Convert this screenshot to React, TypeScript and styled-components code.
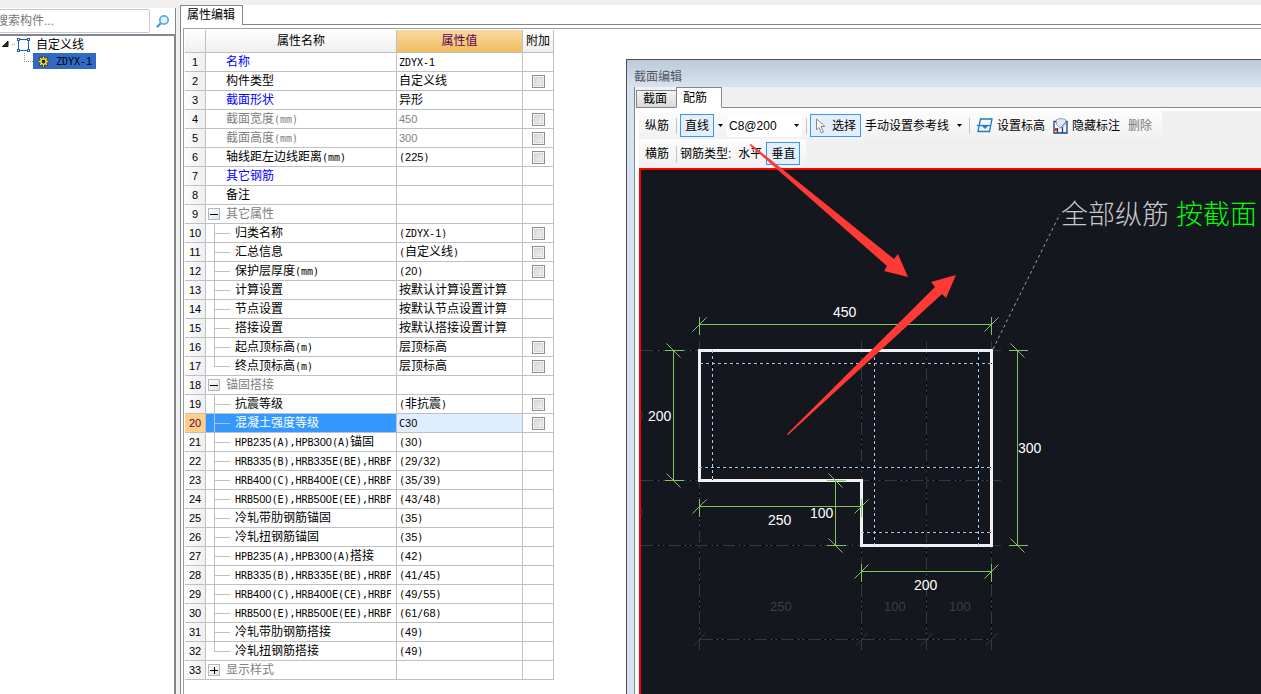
import React from "react";
import styled, { createGlobalStyle, css } from "styled-components";

const GlobalStyle = createGlobalStyle`
  * { box-sizing: border-box; }
  html, body { margin: 0; padding: 0; }
  body {
    background: #f0f0f0;
    color: #000;
    font-family: "Liberation Sans", "Noto Sans CJK SC", sans-serif;
    font-size: 12px;
    line-height: 16px;
    overflow: hidden;
  }
  button, input, select { font: inherit; color: inherit; margin: 0; }
`;

/* ---------- text ---------- */

const Latin = styled.span`
  font-family: "DejaVu Sans Mono", monospace;
  font-size: 10px;
  line-height: 1;
`;

const Digits = styled.span`
  font-family: "Liberation Sans", sans-serif;
  font-size: 11px;
  line-height: 1;
`;

function Mixed({ text }: { text: string }) {
  const parts = text.match(/[0-9]+|[!-/:-~]+|[^!-~]+/g) || [];
  return (
    <span>
      {parts.map((part, i) => {
        if (/^[0-9]/.test(part)) return <Digits key={i}>{part}</Digits>;
        if (/^[!-~]/.test(part)) return <Latin key={i}>{part}</Latin>;
        return part;
      })}
    </span>
  );
}

/* ---------- page ---------- */

const Page = styled.div`
  position: relative;
  display: flex;
  gap: 4px;
  min-height: 100vh;
  padding-top: 5px;
  background: #f0f0f0;
`;

const Sidebar = styled.aside`
  display: flex;
  flex-direction: column;
  flex: 0 0 176px;
  padding-top: 3px;
  overflow: hidden;
`;

const SearchRow = styled.form`
  display: flex;
  align-items: center;
  height: 26px;
  background: #fff;
  border-right: 1px solid #84868b;
`;

const SearchInput = styled.input`
  width: 156px;
  height: 24px;
  margin-left: -6px;
  padding: 0 1px;
  border: 1px solid #c5cad8;
  border-radius: 2px;
  background: #fff;
  outline: none;
  &::placeholder { color: #777; opacity: 1; }
`;

const SearchButton = styled.button`
  display: flex;
  align-items: center;
  justify-content: center;
  flex: 1;
  height: 24px;
  padding: 0;
  border: 0;
  background: transparent;
`;

const Tree = styled.div`
  flex: 1;
  padding-top: 1px;
  background: #fff;
  border-top: 2px solid #84868b;
  border-right: 2px solid #84868b;
`;

const TreeItem = styled.div<{ $level: number }>`
  display: flex;
  align-items: center;
  height: 16px;
  padding-left: ${(p) => (p.$level ? 24 : 1)}px;
`;

const TreeLabel = styled.span<{ $selected?: boolean }>`
  display: flex;
  align-items: center;
  height: 16px;
  gap: 7px;
  padding: 0 4px 0 5px;
  background: ${(p) => (p.$selected ? "#316ac5" : "transparent")};
`;

const Workspace = styled.main`
  display: flex;
  flex-direction: column;
  flex: 1;
  min-width: 0;
  background: #fff;
  border-left: 1px solid #84868b;
`;

const TabStrip = styled.div`
  display: flex;
  height: 20px;
`;

const PaneTab = styled.button`
  width: 62px;
  padding: 0 1px 2px 0;
  border: 1px solid #84868b;
  border-width: 1px 1px 0 0;
  background: #fff;
`;

const TabRule = styled.div`
  flex: 1;
  border-bottom: 1px solid #84868b;
`;

const GridFrame = styled.section`
  flex: 1;
  margin: 3px 0 0 2px;
  padding: 1px 0 0 1px;
  border: 1px solid #a0a0a0;
  border-width: 1px 0 0 1px;
`;

/* ---------- property grid ---------- */

const Grid = styled.table`
  table-layout: fixed;
  width: 369px;
  border-collapse: separate;
  border-spacing: 0;
`;

const HeadCell = styled.th<{ $active?: boolean }>`
  height: 23px;
  padding: 0;
  font-weight: normal;
  color: ${(p) => (p.$active ? "#5c0057" : "#000")};
  background: ${(p) =>
    p.$active
      ? "linear-gradient(#f9d9a0, #f0bd5e)"
      : "linear-gradient(#ffffff, #efefef)"};
  border-right: 1px solid #c0c0c0;
  border-bottom: 1px solid #c0c0c0;
`;

const cell = css`
  height: 19px;
  padding: 0;
  line-height: 16px;
  white-space: nowrap;
  overflow: hidden;
  border-right: 1px solid #c0c0c0;
  border-bottom: 1px solid #c0c0c0;
`;

const NumberCell = styled.th<{ $selected: boolean }>`
  ${cell}
  font-weight: normal;
  color: ${(p) => (p.$selected ? "#5c0057" : "#000")};
  background: ${(p) =>
    p.$selected ? "#ffcf86" : "linear-gradient(90deg, #fdfdfd, #efefef)"};
`;

const tones = { normal: "#000", link: "#0000ff", muted: "#808080" };
type Tone = keyof typeof tones;

const NameCell = styled.td<{ $tone: Tone; $selected: boolean }>`
  ${cell}
  color: ${(p) => (p.$selected ? "#fff" : tones[p.$tone])};
  background: ${(p) => (p.$selected ? "#3399ff" : "#fff")};
`;

const NameContent = styled.div<{ $indent: number }>`
  display: flex;
  align-items: center;
  height: 18px;
  padding: 0 5px 0 ${(p) => p.$indent}px;
  > span { overflow: hidden; }
`;

const BranchLines = styled.svg`
  flex: none;
  width: 21px;
  height: 18px;
`;

const Expander = styled.button`
  display: flex;
  align-items: center;
  justify-content: center;
  flex: none;
  width: 12px;
  height: 12px;
  margin-right: 6px;
  padding: 0;
  border: 1px solid #b4b9c0;
  background: linear-gradient(135deg, #fff, #dfe3e8);
`;

const ValueCell = styled.td<{ $muted: boolean; $selected: boolean }>`
  ${cell}
  padding-left: 2px;
  color: ${(p) => (p.$muted ? "#808080" : "#000")};
  background: ${(p) => (p.$selected ? "#dfeeff" : "#fff")};
`;

const CheckCell = styled.td`
  ${cell}
  line-height: 0;
  text-align: center;
  vertical-align: middle;
`;

const Check = styled.input`
  appearance: none;
  width: 13px;
  height: 13px;
  vertical-align: middle;
  border: 1px solid #8e8f8f;
  background: linear-gradient(135deg, #cdd1d6, #f6f6f6);
  box-shadow: inset 0 0 0 1px #f4f4f4, inset 0 0 0 2px #d4d7db;
`;

type Row = {
  name: string;
  value?: string;
  tone?: Tone;
  kind?: "group" | "closed" | "child" | "last";
  check?: boolean;
  selected?: boolean;
};

const rows: Row[] = [
  { name: "名称", value: "ZDYX-1", tone: "link" },
  { name: "构件类型", value: "自定义线", check: true },
  { name: "截面形状", value: "异形", tone: "link" },
  { name: "截面宽度(mm)", value: "450", tone: "muted", check: true },
  { name: "截面高度(mm)", value: "300", tone: "muted", check: true },
  { name: "轴线距左边线距离(mm)", value: "(225)", check: true },
  { name: "其它钢筋", tone: "link" },
  { name: "备注" },
  { name: "其它属性", tone: "muted", kind: "group" },
  { name: "归类名称", value: "(ZDYX-1)", kind: "child", check: true },
  { name: "汇总信息", value: "(自定义线)", kind: "child", check: true },
  { name: "保护层厚度(mm)", value: "(20)", kind: "child", check: true },
  { name: "计算设置", value: "按默认计算设置计算", kind: "child" },
  { name: "节点设置", value: "按默认节点设置计算", kind: "child" },
  { name: "搭接设置", value: "按默认搭接设置计算", kind: "child" },
  { name: "起点顶标高(m)", value: "层顶标高", kind: "child", check: true },
  { name: "终点顶标高(m)", value: "层顶标高", kind: "last", check: true },
  { name: "锚固搭接", tone: "muted", kind: "group" },
  { name: "抗震等级", value: "(非抗震)", kind: "child", check: true },
  { name: "混凝土强度等级", value: "C30", kind: "child", check: true, selected: true },
  { name: "HPB235(A),HPB300(A)锚固", value: "(30)", kind: "child" },
  { name: "HRB335(B),HRB335E(BE),HRBF", value: "(29/32)", kind: "child" },
  { name: "HRB400(C),HRB400E(CE),HRBF", value: "(35/39)", kind: "child" },
  { name: "HRB500(E),HRB500E(EE),HRBF", value: "(43/48)", kind: "child" },
  { name: "冷轧带肋钢筋锚固", value: "(35)", kind: "child" },
  { name: "冷轧扭钢筋锚固", value: "(35)", kind: "child" },
  { name: "HPB235(A),HPB300(A)搭接", value: "(42)", kind: "child" },
  { name: "HRB335(B),HRB335E(BE),HRBF", value: "(41/45)", kind: "child" },
  { name: "HRB400(C),HRB400E(CE),HRBF", value: "(49/55)", kind: "child" },
  { name: "HRB500(E),HRB500E(EE),HRBF", value: "(61/68)", kind: "child" },
  { name: "冷轧带肋钢筋搭接", value: "(49)", kind: "child" },
  { name: "冷轧扭钢筋搭接", value: "(49)", kind: "last" },
  { name: "显示样式", tone: "muted", kind: "closed" },
];

function PropertyRow({ row, index }: { row: Row; index: number }) {
  const selected = !!row.selected;
  const branch = row.kind === "child" || row.kind === "last";
  const group = row.kind === "group" || row.kind === "closed";
  return (
    <tr>
      <NumberCell scope="row" $selected={selected}>
        <Mixed text={String(index)} />
      </NumberCell>
      <NameCell $tone={row.tone || "normal"} $selected={selected}>
        <NameContent $indent={branch ? 8 : group ? 2 : 20}>
          {branch && (
            <BranchLines viewBox="0 0 21 18" shapeRendering="crispEdges">
              <path
                d={row.kind === "last" ? "M.5 0V9.5H16" : "M.5 0V18M.5 9.5H16"}
                fill="none"
                stroke="#c0c0c0"
              />
            </BranchLines>
          )}
          {group && (
            <Expander aria-label={row.name}>
              <svg width="10" height="10" viewBox="0 0 10 10" shapeRendering="crispEdges">
                <path
                  d={row.kind === "closed" ? "M1 5.5H9M5.5 2V9" : "M1 5.5H9"}
                  stroke="#000"
                />
              </svg>
            </Expander>
          )}
          <Mixed text={row.name} />
        </NameContent>
      </NameCell>
      <ValueCell $muted={row.tone === "muted"} $selected={selected}>
        {row.value && <Mixed text={row.value} />}
      </ValueCell>
      <CheckCell>
        {row.check && <Check type="checkbox" aria-label={row.name} />}
      </CheckCell>
    </tr>
  );
}

/* ---------- section editor window ---------- */

const EditorWindow = styled.section`
  position: absolute;
  left: 626px;
  top: 59px;
  right: 0;
  bottom: 0;
  display: flex;
  flex-direction: column;
  padding-left: 7px;
  background: #d7e3f0;
  border: 1px solid #4d4f52;
  border-width: 1px 0 0 1px;
`;

const TitleBar = styled.header`
  height: 27px;
  margin-left: -7px;
  padding: 9px 0 0 7px;
  color: #50555c;
  background: linear-gradient(#bccad9, #d7e3f0);
`;

const EditorBody = styled.div`
  display: flex;
  flex-direction: column;
  flex: 1;
  min-height: 0;
  background: #fff;
  border-left: 1px solid #84868b;
`;

const EditorTabs = styled.div`
  display: flex;
  align-items: flex-end;
  height: 21px;
  padding-left: 1px;
  background: #f0f0f0;
`;

const EditorTab = styled.button<{ $active?: boolean }>`
  width: ${(p) => (p.$active ? 46 : 40)}px;
  height: ${(p) => (p.$active ? 21 : 18)}px;
  padding: 0 0 0 6px;
  text-align: left;
  border: 1px solid #84868b;
  border-bottom-color: ${(p) => (p.$active ? "#fff" : "#84868b")};
  border-right-width: ${(p) => (p.$active ? 1 : 0)}px;
  background: ${(p) => (p.$active ? "#fff" : "linear-gradient(#f4f4f4, #d9d9d9)")};
`;

const Toolbars = styled.div`
  display: flex;
  flex-direction: column;
  align-items: flex-start;
  height: 57px;
  margin: 3px 0 0 4px;
  background: #f0f0f0;
`;

const Toolbar = styled.div`
  display: flex;
  align-items: center;
  height: 28px;
  padding: 1px 6px 0;
  border-radius: 2px;
  background: linear-gradient(#fdfdfd, #f1f1f1);
`;

const Tool = styled.button<{ $on?: boolean; $dim?: boolean }>`
  display: flex;
  align-items: center;
  gap: 4px;
  height: 23px;
  padding: 0 4px;
  white-space: nowrap;
  border: ${(p) => (p.$on ? "1px solid #3399ff" : "0")};
  background: ${(p) => (p.$on ? "#e4effb" : "transparent")};
  color: ${(p) => (p.$dim ? "#777" : "#000")};
`;

const CaretTool = styled.button`
  display: flex;
  align-items: center;
  justify-content: center;
  width: 12px;
  height: 23px;
  padding: 0;
  border: 0;
  background: transparent;
`;

const Divider = styled.span`
  width: 1px;
  height: 16px;
  margin: 0 3px 0 4px;
  background: #c2c2c2;
`;

const Caption = styled.span`
  padding: 0 3px 0 0;
  white-space: nowrap;
`;

const Combo = styled.div`
  display: flex;
  align-items: center;
  width: 75px;
  height: 22px;
  margin-left: 1px;
  background: #fff;
`;

const ComboSelect = styled.select`
  flex: 1;
  height: 22px;
  padding: 0 0 0 2px;
  border: 0;
  appearance: none;
  background: transparent;
`;

const Canvas = styled.div`
  flex: 1;
  min-height: 0;
  margin-left: 4px;
  overflow: hidden;
  background: #14171e;
  border: 2px solid #ff0000;
  border-width: 2px 0 0 2px;
`;

const Drawing = styled.svg`
  display: block;
  width: 620px;
  height: 524px;
`;

const ArrowLayer = styled.svg`
  position: absolute;
  left: 740px;
  top: 135px;
  width: 230px;
  height: 310px;
  pointer-events: none;
`;

function Caret() {
  return (
    <svg width="5" height="3" viewBox="0 0 5 3">
      <path d="M0 0H5L2.5 3Z" fill="#000" />
    </svg>
  );
}

function HDim({ x1, x2, y }: { x1: number; x2: number; y: number }) {
  return (
    <g>
      <path d={`M${x1} ${y}H${x2}M${x1} ${y - 8}V${y + 10}M${x2} ${y - 8}V${y + 10}`} shapeRendering="crispEdges" />
      <path d={`M${x1 - 7} ${y + 7}L${x1 + 7} ${y - 7}M${x2 - 7} ${y + 7}L${x2 + 7} ${y - 7}`} />
    </g>
  );
}

function VDim({ x, y1, y2 }: { x: number; y1: number; y2: number }) {
  return (
    <g>
      <path d={`M${x} ${y1}V${y2}M${x - 9} ${y1}H${x + 10}M${x - 9} ${y2}H${x + 10}`} shapeRendering="crispEdges" />
      <path d={`M${x - 7} ${y1 - 7}L${x + 7} ${y1 + 7}M${x - 7} ${y2 - 7}L${x + 7} ${y2 + 7}`} />
    </g>
  );
}

const AXES =
  "M641 350.5H1001M641 480.5H1001M641 545.5H1001M699.5 341V652M861.5 341V652M926.5 341V652M991.5 341V652M699.5 639.5H992";
const COVER =
  "M700 363.5H992M699 467.5H991M861 532.5H991M712.5 350V480M874.5 351V545M978.5 351V546";

function SectionDrawing() {
  return (
    <Drawing viewBox="641 170 620 524">
      <g fill="none" shapeRendering="crispEdges">
        <path d={AXES} stroke="#000" />
        <path d={AXES} stroke="#323946" strokeDasharray="13 3 3 2 3 3" />
      </g>
      <g stroke="#323946" fill="none">
        {[699.5, 861.5, 926.5, 991.5].map((x) => (
          <path key={x} d={`M${x - 6} 646L${x + 6} 633`} />
        ))}
        <path d="M641 411Q644 415 641 420M641 508Q644 512 641 517" />
      </g>
      <path
        d="M699.5 350.5H991.5V545.5H861.5V480.5H699.5Z"
        fill="none"
        stroke="#f2f0f2"
        strokeWidth="3"
        shapeRendering="crispEdges"
      />
      <g fill="none" shapeRendering="crispEdges">
        <path d={COVER} stroke="#000" />
        <path d={COVER} stroke="#a4cdf5" strokeDasharray="3 3" />
      </g>
      <g fill="none" stroke="#7fc463">
        <HDim x1={699.5} x2={991.5} y={324.5} />
        <HDim x1={699.5} x2={861.5} y={506.5} />
        <HDim x1={861.5} x2={991.5} y={571.5} />
        <VDim x={673.5} y1={350.5} y2={480.5} />
        <VDim x={835.5} y1={480.5} y2={545.5} />
        <VDim x={1017.5} y1={350.5} y2={545.5} />
      </g>
      <path d="M993 349L1060 214" stroke="#a0a0a0" strokeDasharray="3 3" />
      <g fill="#fff" fontFamily="Liberation Sans, sans-serif" fontSize="14">
        <text x="833" y="317">450</text>
        <text x="648" y="421">200</text>
        <text x="768" y="525">250</text>
        <text x="810" y="518">100</text>
        <text x="914" y="590">200</text>
        <text x="1018" y="453">300</text>
      </g>
      <g fill="#3a404c" fontFamily="Liberation Sans, sans-serif" fontSize="13">
        <text x="770" y="611">250</text>
        <text x="884" y="611">100</text>
        <text x="949" y="611">100</text>
      </g>
      <g fontFamily="Noto Sans CJK SC, sans-serif" fontSize="27" fontWeight="300">
        <text x="1061" y="224" fill="#c8c8c8">全部纵筋</text>
        <text x="1176" y="224" fill="#00ff00">按截面</text>
      </g>
    </Drawing>
  );
}

export default function App() {
  return (
    <>
      <GlobalStyle />
      <Page>
        <Sidebar>
          <SearchRow onSubmit={(e) => e.preventDefault()}>
            <SearchInput aria-label="搜索构件" placeholder="搜索构件..." />
            <SearchButton aria-label="搜索">
              <svg width="14" height="14" viewBox="0 0 14 14">
                <path d="M1.5 12.5L5 9" stroke="#4a9be0" strokeWidth="2.4" strokeLinecap="round" />
                <circle cx="8" cy="6" r="4.2" fill="#e3f3fd" stroke="#5aaceb" strokeWidth="1.8" />
              </svg>
            </SearchButton>
          </SearchRow>
          <Tree>
            <TreeItem $level={0}>
              <svg width="30" height="16" viewBox="0 0 30 16">
                <path d="M7 4V9.500H1.500Z" fill="#333" stroke="#111" />
                <path d="M11 7.500H15" stroke="#999" strokeDasharray="1 1" />
                <g fill="none" stroke="#1c5fc0" shapeRendering="crispEdges">
                  <path d="M17.500 2.500H27.500V13.500H17.500Z" />
                  <path d="M16.500 1.500h2v2h-2ZM26.500 1.500h2v2h-2ZM16.500 12.500h2v2h-2ZM26.500 12.500h2v2h-2Z" fill="#fff" />
                </g>
              </svg>
              <TreeLabel>自定义线</TreeLabel>
            </TreeItem>
            <TreeItem $level={1}>
              <svg width="9" height="16" viewBox="0 0 9 16">
                <path d="M.5 0V8.500H9" fill="none" stroke="#999" strokeDasharray="1 1" shapeRendering="crispEdges" />
              </svg>
              <TreeLabel $selected>
                <svg width="11" height="11" viewBox="0 0 11 11">
                  <path d="M5.500 0V11M0 5.500H11M1.500 1.500L9.500 9.500M9.500 1.500L1.500 9.500" stroke="#222" strokeWidth="2.400" />
                  <path d="M5.500 .5V10.500M.5 5.500H10.500M2 2L9 9M9 2L2 9" stroke="#ffec1a" strokeWidth="1.300" />
                  <circle cx="5.500" cy="5.500" r="2.600" fill="#222" stroke="#ffec1a" strokeWidth="1.400" />
                </svg>
                <Mixed text="ZDYX-1" />
              </TreeLabel>
            </TreeItem>
          </Tree>
        </Sidebar>

        <Workspace>
          <TabStrip>
            <PaneTab>属性编辑</PaneTab>
            <TabRule />
          </TabStrip>
          <GridFrame>
            <Grid>
              <colgroup>
                <col width="21" />
                <col width="191" />
                <col width="126" />
                <col width="31" />
              </colgroup>
              <thead>
                <tr>
                  <HeadCell aria-label="序号" />
                  <HeadCell>属性名称</HeadCell>
                  <HeadCell $active>属性值</HeadCell>
                  <HeadCell>附加</HeadCell>
                </tr>
              </thead>
              <tbody>
                {rows.map((row, i) => (
                  <PropertyRow key={i} row={row} index={i + 1} />
                ))}
              </tbody>
            </Grid>
          </GridFrame>
        </Workspace>

        <EditorWindow>
          <TitleBar>截面编辑</TitleBar>
          <EditorBody>
            <EditorTabs>
              <EditorTab>截面</EditorTab>
              <EditorTab $active>配筋</EditorTab>
              <TabRule />
            </EditorTabs>
            <Toolbars>
              <Toolbar>
                <Caption>纵筋</Caption>
                <Divider />
                <Tool $on>直线</Tool>
                <CaretTool aria-label="线型">
                  <Caret />
                </CaretTool>
                <Combo>
                  <ComboSelect aria-label="钢筋规格">
                    <option>C8@200</option>
                  </ComboSelect>
                  <CaretTool as="span">
                    <Caret />
                  </CaretTool>
                </Combo>
                <Divider />
                <Tool $on>
                  <svg width="13" height="16" viewBox="0 0 13 16">
                    <path d="M1.500 1V12L4 9.500L6.500 15L8.500 14L6 8.500H10Z" fill="#fff" stroke="#8a8a8a" />
                  </svg>
                  选择
                </Tool>
                <Tool>手动设置参考线</Tool>
                <CaretTool aria-label="参考线选项">
                  <Caret />
                </CaretTool>
                <Divider />
                <Tool>
                  <svg width="16" height="15" viewBox="0 0 16 15" fill="none" stroke="#1a7bcb">
                    <path d="M3.500 1H15L12.500 13.500H1Z" strokeWidth="1.300" />
                    <path d="M0 7.500H14" strokeWidth="1.200" />
                    <path d="M5 7.500H11L8 10.500Z" fill="#1a7bcb" />
                  </svg>
                  设置标高
                </Tool>
                <Tool>
                  <svg width="15" height="16" viewBox="0 0 15 16">
                    <path d="M3 3.500H1V15H14V3.500H12M4.500 10V15M9.500 9V15" fill="none" stroke="#17437c" strokeWidth="1.300" />
                    <path d="M3.500 1.500Q8 -.5 12.500 1.500V6L9 9.500H6.500L3.500 6.500Z" fill="#dfe8f4" stroke="#8ea3c2" />
                    <path d="M7 10.500L12 5" stroke="#6683b0" />
                    <rect x="1.500" y="10" width="2.500" height="3" fill="#e23b1c" />
                  </svg>
                  隐藏标注
                </Tool>
                <Tool $dim>删除</Tool>
              </Toolbar>
              <Toolbar>
                <Caption>横筋</Caption>
                <Divider />
                <Caption>钢筋类型:</Caption>
                <Tool>水平</Tool>
                <Tool $on>垂直</Tool>
              </Toolbar>
            </Toolbars>
            <Canvas>
              <SectionDrawing />
            </Canvas>
          </EditorBody>
        </EditorWindow>

        <ArrowLayer viewBox="740 135 230 310" fill="#ff3a36">
          <path d="M749.500 145L751 144L894 259L898 254L908 277L884 271L887 266Z" />
          <path d="M787 434L935 287L931 282L956 275L946 298L942 294L788 435Z" />
        </ArrowLayer>
      </Page>
    </>
  );
}
